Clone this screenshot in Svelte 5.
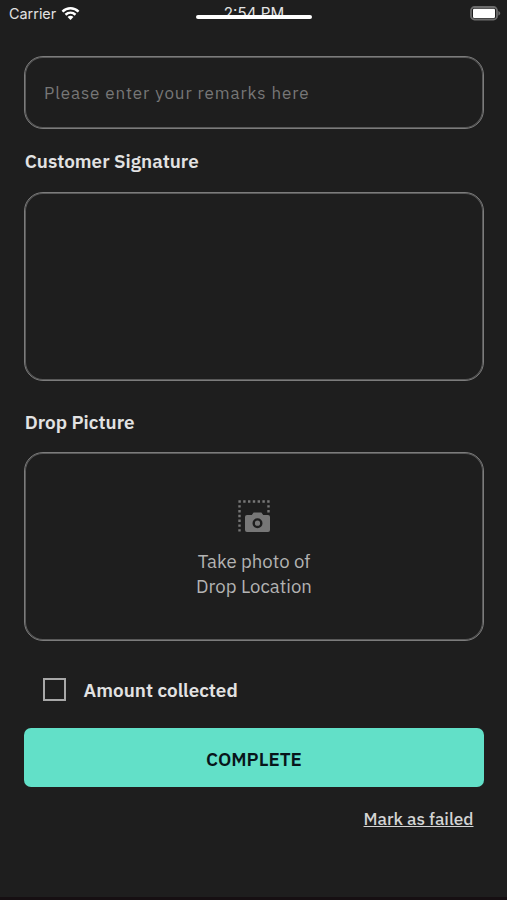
<script lang="ts">
  let remarks = $state('');
  let collected = $state(false);
</script>

<div class="screen">
  <header class="status-bar">
    <div class="carrier">
      <span class="carrier-name">Carrier</span>
      <svg class="wifi" viewBox="0 0 20 15" aria-hidden="true">
        <path d="M1.5 5.5C6.4.9 13.6.9 18.5 5.5" />
        <path d="M4.7 8.8c3.1-2.8 7.5-2.8 10.6 0" />
        <path class="dot" d="M10 14.3 6.9 11.2c1.8-1.6 4.4-1.6 6.2 0z" />
      </svg>
    </div>
    <div class="clock">
      <span class="time">2:54 PM</span>
      <span class="home-indicator"></span>
    </div>
    <svg class="battery" viewBox="0 0 31 15" aria-hidden="true">
      <rect x="1" y="1" width="26" height="12.5" rx="3.5" fill="none" stroke="#6c6c6c" stroke-width="1.8" />
      <rect x="3" y="2.7" width="22" height="9.2" rx="1.2" fill="#fff" />
      <path d="M28.3 5c2.6 1 2.6 3.6 0 4.6z" fill="#6c6c6c" />
    </svg>
  </header>

  <main class="form">
    <input class="panel remarks" placeholder="Please enter your remarks here" bind:value={remarks} />

    <h2 class="heading">Customer Signature</h2>
    <div class="panel signature"></div>

    <h2 class="heading picture-heading">Drop Picture</h2>
    <button class="panel picture" type="button">
      <svg class="camera" viewBox="0 0 32 32" aria-hidden="true">
        <path class="dots" d="M.4 1.5H32M1.5 5.2V32M30.5 5.2v8" />
        <path
          fill-rule="evenodd"
          d="M9 15h4.8l1.8-2.6h7.8l1.8 2.6H30a2 2 0 0 1 2 2v13a2 2 0 0 1-2 2H9a2 2 0 0 1-2-2V17a2 2 0 0 1 2-2zm10.5 3.2a5 5 0 1 0 0 10 5 5 0 0 0 0-10zm0 2.4a2.6 2.6 0 1 1 0 5.2 2.6 2.6 0 0 1 0-5.2z"
        />
      </svg>
      <span class="caption">Take photo of</span>
      <span class="caption">Drop Location</span>
    </button>

    <label class="collected">
      <input type="checkbox" bind:checked={collected} />
      <span>Amount collected</span>
    </label>

    <button class="complete" type="button">COMPLETE</button>
    <button class="failed" type="button">Mark as failed</button>
  </main>
</div>

<style>
  :global(body) {
    background: #1e1e1e;
  }

  .screen {
    box-sizing: border-box;
    height: 900px;
    overflow: hidden;
    border-bottom: 3px solid #160f12;
    background: #1e1e1e;
    color: #e2e2e2;
    font-family: 'IBM Plex Sans', Roboto, sans-serif;
  }

  .status-bar {
    display: grid;
    grid-template-columns: 1fr 116px 1fr;
    grid-template-rows: 27px;
    height: 27px;
    padding: 0 6px 0 7px;
    font-family: Inter, sans-serif;
    font-size: 14.4px;
    line-height: 27px;
  }

  .carrier {
    display: flex;
    align-items: center;
    gap: 5px;
    padding-left: 2px;
  }

  .wifi {
    width: 19px;
    height: 15px;
    fill: none;
    stroke: #fff;
    stroke-width: 2.6;
  }

  .wifi .dot {
    fill: #fff;
    stroke: none;
  }

  .clock {
    position: relative;
    font-size: 15.2px;
    text-align: center;
    white-space: nowrap;
  }

  /* The indicator sits over the lower edge of the clock. */
  .home-indicator {
    position: absolute;
    left: 0;
    top: 15px;
    width: 116px;
    height: 4px;
    border-radius: 2px;
    background: #fff;
    box-shadow: 0 1px #1e1e1e;
  }

  .battery {
    justify-self: end;
    width: 31px;
    height: 15px;
    margin-top: 6px;
  }

  .form {
    display: flex;
    flex-direction: column;
    padding: 29px 23px 0 24px;
  }

  .panel {
    box-sizing: border-box;
    width: 100%;
    border: 1px solid #7c7c7c;
    border-radius: 19px;
    background: transparent;
    box-shadow: inset 0 0 0 1px #585858;
    color: inherit;
    font-family: inherit;
  }

  .remarks {
    height: 73px;
    padding: 0 19px;
    font-size: 17px;
    letter-spacing: 0.9px;
  }

  .remarks::placeholder {
    color: #777;
    opacity: 1;
  }

  .heading {
    height: 63px;
    margin: 0;
    padding-left: 0.7px;
    font-size: 18.9px;
    font-weight: 600;
    line-height: 64px;
  }

  .signature,
  .picture {
    height: 189px;
  }

  .picture-heading {
    height: 71px;
    line-height: 83px;
  }

  .picture {
    display: flex;
    flex-direction: column;
    align-items: center;
    padding: 47px 0 0;
    font-size: 18.6px;
    line-height: 24.5px;
  }

  .camera {
    width: 32px;
    height: 32px;
    margin-bottom: 17px;
    fill: #777;
  }

  .dots {
    fill: none;
    stroke: #777;
    stroke-width: 2.4;
    stroke-dasharray: 2.4 2.4;
  }

  .caption {
    color: #b3b3b3;
  }

  .collected {
    display: flex;
    align-items: center;
    gap: 18px;
    height: 87px;
    box-sizing: border-box;
    padding: 10px 0 0 18.6px;
    font-size: 18.9px;
    font-weight: 600;
  }

  .collected input {
    appearance: none;
    width: 23px;
    height: 23px;
    margin: 0;
    border: 2px solid #a8a8a8;
  }

  .collected input:checked {
    background: #62e0c8;
  }

  .complete {
    height: 59px;
    border: 0;
    border-radius: 7px;
    background: #62e0c8;
    color: #08151a;
    font: 600 18.8px/60px 'IBM Plex Sans', Roboto, sans-serif;
  }

  .failed {
    align-self: flex-end;
    margin: 20px 10.5px 0 0;
    padding: 0;
    border: 0;
    background: none;
    color: #d4d4d4;
    font: 500 17.2px/24px 'IBM Plex Sans', Roboto, sans-serif;
    text-decoration: underline;
  }
</style>
